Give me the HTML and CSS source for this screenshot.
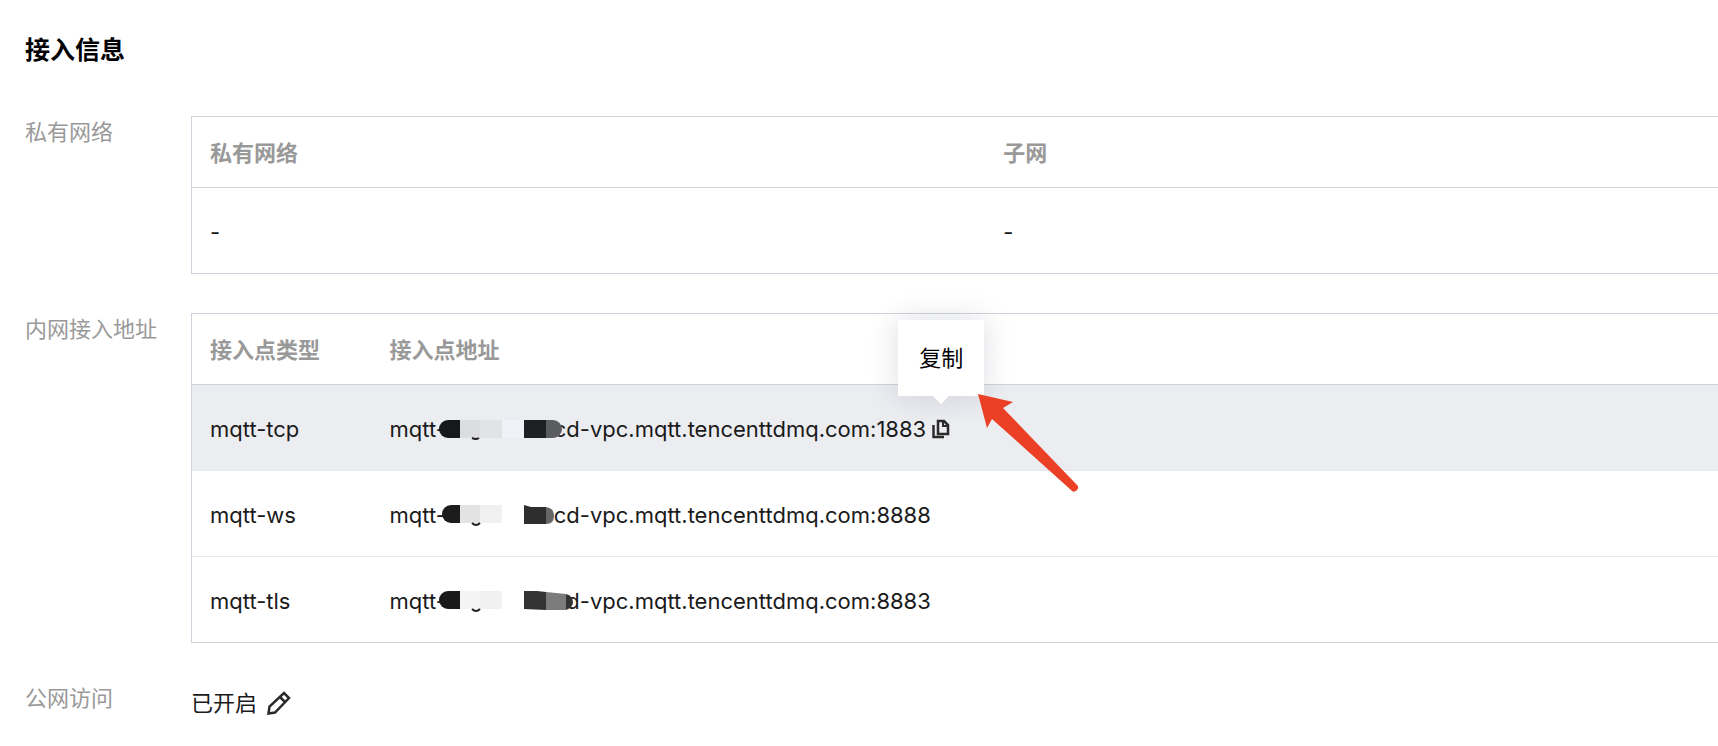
FILE: index.html
```html
<!DOCTYPE html>
<html lang="zh-CN">
<head>
    <meta charset="UTF-8">
    <meta name="viewport" content="width=device-width, initial-scale=1.0">
    <title>接入信息</title>
    <link rel="stylesheet" href="styles.css">
</head>
<body>
    <section class="panel">
        <h2 class="panel-title">接入信息</h2>

        <div class="form-row">
            <div class="form-label" id="vpc-label">私有网络</div>
            <table class="table" aria-labelledby="vpc-label">
                <thead>
                    <tr>
                        <th class="col-vpc">私有网络</th>
                        <th>子网</th>
                    </tr>
                </thead>
                <tbody>
                    <tr>
                        <td>-</td>
                        <td>-</td>
                    </tr>
                </tbody>
            </table>
        </div>

        <div class="form-row">
            <div class="form-label" id="address-label">内网接入地址</div>
            <table class="table" aria-labelledby="address-label">
                <thead>
                    <tr>
                        <th class="col-type">接入点类型</th>
                        <th>接入点地址</th>
                    </tr>
                </thead>
                <tbody>
                    <tr class="active">
                        <td>mqtt-tcp</td>
                        <td>
                            <div class="address">
                                <span>mqtt-</span>
                                <svg class="mask" width="116" height="22" viewBox="0 0 116 22">
                                    <path d="M22 2H10a9 9 0 0 0 0 18h12z" fill="#17181b"/>
                                    <path d="M22 2h20v18H22z" fill="#dcdde0"/>
                                    <path d="M42 2h22v18H42z" fill="#e2e3e7"/>
                                    <path d="M64 2h22v18H64z" fill="#f1f2f7"/>
                                    <path d="M86 2h22v18H86z" fill="#1f2023"/>
                                    <path d="M108 2h7a9 9 0 0 1 0 18h-7z" fill="#5b5c5f"/>
                                    <path d="M34 20q4 2 7 0" fill="none" stroke="#222" stroke-width="2"/>
                                </svg>
                                <span>cd-vpc.mqtt.tencenttdmq.com:1883</span>
                                <button type="button" class="copy" aria-label="复制">
                                    <svg width="18" height="20" viewBox="0 0 18 20" fill="none" stroke="#2b2b2b" stroke-width="2.500">
                                        <path d="M6 2h6l4 4v9H6z"/>
                                        <path d="M11 1v6h6" stroke-width="2"/>
                                        <path d="M1.500 6v12H12"/>
                                    </svg>
                                    <span class="tooltip" role="tooltip">复制</span>
                                    <svg class="pointer" width="102" height="100" viewBox="0 0 102 100" fill="#eb4026">
                                        <path d="M1 1l35 8-10 6 74 77a3.500 3.500 0 0 1-6 5L15 26l-5 9z"/>
                                    </svg>
                                </button>
                            </div>
                        </td>
                    </tr>
                    <tr>
                        <td>mqtt-ws</td>
                        <td>
                            <div class="address">
                                <span>mqtt-</span>
                                <svg class="mask" width="116" height="22" viewBox="0 0 116 22">
                                    <path d="M22 1h-9a9 9 0 0 0 0 18h9z" fill="#1c1c1c"/>
                                    <path d="M22 1h20v18H22z" fill="#e3e3e3"/>
                                    <path d="M42 1h22v18H42z" fill="#f1f1f1"/>
                                    <path d="M86 1l7 2h15v17H86z" fill="#2e2e2e"/>
                                    <path d="M108 3q8 1 8 9t-8 8z" fill="#666"/>
                                    <path d="M34 19q4 4 8 0" fill="none" stroke="#222" stroke-width="2"/>
                                </svg>
                                <span>cd-vpc.mqtt.tencenttdmq.com:8888</span>
                            </div>
                        </td>
                    </tr>
                    <tr>
                        <td>mqtt-tls</td>
                        <td>
                            <div class="address">
                                <span>mqtt-</span>
                                <svg class="mask" width="116" height="22" viewBox="0 0 116 22">
                                    <path d="M22 1H10a9 9 0 0 0 0 18h12z" fill="#1a1a1a"/>
                                    <path d="M22 1h20v18H22z" fill="#f4f4f4"/>
                                    <path d="M42 1h22v18H42z" fill="#f1f1f1"/>
                                    <path d="M86 1h13l9 1v18l-22-1z" fill="#333"/>
                                    <path d="M108 2l20 2v16h-20z" fill="#7b7b7b"/>
                                    <path d="M128 4q7 2 7 9-1 5-7 7z" fill="#333"/>
                                    <path d="M34 19q4 4 8 0" fill="none" stroke="#222" stroke-width="2"/>
                                </svg>
                                <span>cd-vpc.mqtt.tencenttdmq.com:8883</span>
                            </div>
                        </td>
                    </tr>
                </tbody>
            </table>
        </div>

        <div class="form-row">
            <div class="form-label">公网访问</div>
            <div class="form-value">
                <span>已开启</span>
                <button type="button" class="edit" aria-label="编辑">
                    <svg width="24" height="24" viewBox="0 0 24 24" fill="none" stroke="#2b2b2b" stroke-width="2.500">
                        <path d="M1.500 22.500l1-7L17 2l5 5L8 21.500z"/>
                        <path d="M13 6l5 5"/>
                    </svg>
                </button>
            </div>
        </div>
    </section>
</body>
</html>
```
FILE: styles.css
```css
body {
    margin: 0;
    background-color: #fff;
    color: #1a1a1a;
    font-family: Inter, "Noto Sans CJK SC", sans-serif;
    font-size: 22px;
    line-height: 32px;
    overflow-x: hidden;
}
.panel {
    padding: 32px 0 22px 25px;
}
.panel-title {
    margin: 0 0 48px;
    color: #000;
    font-size: 25px;
    line-height: 36px;
}
.form-row {
    display: grid;
    grid-template-columns: 166px 1fr;
    align-items: start;
    margin-bottom: 39px;
}
.form-label {
    color: #999;
}
.form-value {
    display: flex;
    align-items: center;
    gap: 10px;
    padding-top: 5px;
}
.table {
    width: 100%;
    border: 1px solid #cfd2dc;
    border-right: none;
    border-collapse: collapse;
    table-layout: fixed;
}
.table th,
.table td {
    box-sizing: border-box;
    height: 71px;
    padding: 2px 18px 0;
    text-align: left;
}
.table th {
    border-bottom: 1px solid #cfd2dc;
    color: #999;
    font-weight: 700;
}
.table td {
    height: 86px;
    border-bottom: 1px solid #e5e7ec;
}
.table tr:last-child td {
    border-bottom-color: #cfd2dc;
}
.table .active {
    background-color: #ecedf1;
}
.table .col-vpc {
    width: 52%;
}
.table .col-type {
    width: 180px;
}
.address {
    display: flex;
    align-items: center;
    white-space: nowrap;
}
.mask {
    position: relative;
    flex: none;
    margin-left: -8px;
    overflow: visible;
}
button {
    padding: 0;
    border: none;
    background: none;
    cursor: pointer;
    font: inherit;
}
button svg {
    display: block;
}
.copy {
    position: relative;
    margin-left: 6px;
}
.tooltip {
    position: absolute;
    bottom: 43px;
    left: 50%;
    padding: 22px 21px;
    background-color: #fff;
    box-shadow: 0 0 30px rgba(40, 45, 70, 0.16);
    color: #000;
    transform: translateX(-50%);
}
.tooltip::after {
    content: "";
    position: absolute;
    top: 100%;
    left: 50%;
    margin-left: -8px;
    border: 8px solid transparent;
    border-top-color: #fff;
    border-bottom: none;
}
.pointer {
    position: absolute;
    top: -26px;
    left: 45px;
}
```
